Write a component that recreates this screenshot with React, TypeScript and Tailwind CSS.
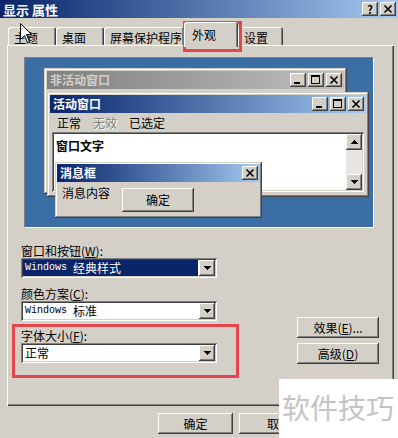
import React from 'react';

const raised =
  'shadow-[inset_-1px_-1px_#404040,inset_1px_1px_#ffffff,inset_-2px_-2px_#808080,inset_2px_2px_#d4d0c8]';
const sunken =
  'shadow-[inset_1px_1px_#808080,inset_-1px_-1px_#ffffff,inset_2px_2px_#404040,inset_-2px_-2px_#d4d0c8]';
const frame =
  'shadow-[inset_-1px_-1px_#404040,inset_1px_1px_#d4d0c8,inset_-2px_-2px_#808080,inset_2px_2px_#ffffff]';
const tabEdge = 'shadow-[inset_1px_1px_#ffffff,inset_-1px_0_#404040,inset_-2px_0_#808080]';

type Glyph = 'min' | 'max' | 'close' | 'help';

// kleine knoppen in de titelbalk
const CaptionButton = ({ glyph }: { glyph: Glyph }) => (
  <div className={`flex h-[14px] w-[16px] items-center justify-center bg-[#d4d0c8] ${raised}`}>
    {glyph === 'help' ? (
      <span className="text-[11px] font-bold leading-none text-black">?</span>
    ) : (
      <svg width="16" height="14" viewBox="0 0 16 14" shapeRendering="crispEdges">
        {glyph === 'min' && <rect x="4" y="9" width="6" height="2" fill="#000" />}
        {glyph === 'max' && (
          <>
            <rect x="3" y="2" width="9" height="2" fill="#000" />
            <rect x="3" y="2" width="1" height="9" fill="#000" />
            <rect x="11" y="2" width="1" height="9" fill="#000" />
            <rect x="3" y="10" width="9" height="1" fill="#000" />
          </>
        )}
        {glyph === 'close' && (
          <path d="M4.5 3.5 L11.5 10.5 M11.5 3.5 L4.5 10.5" stroke="#000" strokeWidth="1.6" shapeRendering="auto" />
        )}
      </svg>
    )}
  </div>
);

const Arrow = ({ up = false }: { up?: boolean }) => (
  <svg width="7" height="4" viewBox="0 0 7 4" shapeRendering="crispEdges">
    <polygon points={up ? '3.5,0 7,4 0,4' : '0,0 7,0 3.5,4'} fill="#000" />
  </svg>
);

const TitleBar = ({
  title,
  active = true,
  big = false,
  buttons,
}: {
  title: string;
  active?: boolean;
  big?: boolean;
  buttons: Glyph[];
}) => (
  <div
    className={`flex h-[18px] items-center justify-between pl-[3px] pr-[2px] ${
      active
        ? 'bg-gradient-to-r from-[#0a246a] to-[#a6caf0] text-white'
        : 'bg-gradient-to-r from-[#808080] to-[#c0c0c0] text-[#d4d0c8]'
    }`}
  >
    <span className={`${big ? 'text-[13px]' : 'text-[12px]'} font-bold leading-none`}>{title}</span>
    <div className="flex gap-[2px]">
      {buttons.map((b) => (
        <CaptionButton key={b} glyph={b} />
      ))}
    </div>
  </div>
);

const Dropdown = ({ children, selected = false }: { children: React.ReactNode; selected?: boolean }) => (
  <div className={`flex h-[20px] w-[196px] bg-white p-[2px] ${sunken}`}>
    <div
      className={`mr-[1px] flex flex-1 items-center pl-[2px] text-[12px] leading-none ${
        selected ? 'bg-[#0a246a] text-white' : 'text-black'
      }`}
    >
      {children}
    </div>
    <div className={`flex w-[16px] items-center justify-center bg-[#d4d0c8] ${raised}`}>
      <Arrow />
    </div>
  </div>
);

const Button = ({ children, className = '' }: { children: React.ReactNode; className?: string }) => (
  <div
    className={`flex items-center justify-center bg-[#d4d0c8] text-[12px] leading-none text-black ${raised} ${className}`}
  >
    {children}
  </div>
);

const Tab = ({ label, w, active = false }: { label: string; w: string; active?: boolean }) => (
  <div
    className={`rounded-t-[3px] bg-[#d4d0c8] text-[12px] leading-[14px] ${tabEdge} ${w} ${
      active ? 'relative z-10 -mb-[2px] h-[25px] pl-[8px] pt-[6px]' : 'h-[18px] pl-[6px] pt-[4px]'
    }`}
  >
    {label}
  </div>
);

export default function App() {
  return (
    <div className="relative flex h-[438px] w-[398px] flex-col overflow-hidden bg-[#d4d0c8] font-[family-name:'Noto_Sans_CJK_SC','Liberation_Sans',sans-serif] text-black">
      <TitleBar title="显示 属性" big buttons={['help', 'close']} />

      {/* tabbladen */}
      <div className="flex h-[27px] items-end pl-[8px]">
        <Tab label="主题" w="w-[48px]" />
        <Tab label="桌面" w="w-[48px]" />
        <Tab label="屏幕保护程序" w="w-[80px]" />
        <Tab label="外观" w="w-[54px]" active />
        <Tab label="设置" w="w-[45px]" />
      </div>

      {/* paneel */}
      <div className="ml-[7px] flex h-[361px] w-[387px] flex-col shadow-[inset_1px_1px_#ffffff,inset_-1px_-1px_#404040,inset_-2px_-2px_#808080]">
        <div className="relative ml-[17px] mt-[12px] h-[171px] w-[350px] border border-t-[#808080] border-l-[#808080] border-r-white border-b-white bg-[#3a6ea5]">
          {/* niet-actief venster */}
          <div className={`absolute left-[19px] top-[10px] h-[126px] w-[303px] bg-[#d4d0c8] p-[3px] ${frame}`}>
            <TitleBar title="非活动窗口" active={false} buttons={['min', 'max', 'close']} />
          </div>

          {/* actief venster */}
          <div className={`absolute left-[22px] top-[34px] flex h-[105px] w-[322px] flex-col bg-[#d4d0c8] p-[3px] ${frame}`}>
            <TitleBar title="活动窗口" buttons={['min', 'max', 'close']} />
            <div className="flex h-[19px] items-center gap-[12px] pl-[7px] text-[12px] leading-none">
              <span>正常</span>
              <span className="text-[#808080] [text-shadow:1px_1px_#ffffff]">无效</span>
              <span>已选定</span>
            </div>
            <div className={`mx-[2px] flex h-[60px] bg-white p-[2px] ${sunken}`}>
              <div className="flex-1 pl-[2px] pt-[6px] text-[12px] font-bold leading-none">窗口文字</div>
              <div className="flex w-[16px] flex-col justify-between bg-[#e8e6e0]">
                <div className={`flex h-[16px] items-center justify-center bg-[#d4d0c8] ${raised}`}>
                  <Arrow up />
                </div>
                <div className={`flex h-[16px] items-center justify-center bg-[#d4d0c8] ${raised}`}>
                  <Arrow />
                </div>
              </div>
            </div>
          </div>

          {/* berichtvenster */}
          <div className={`absolute left-[30px] top-[104px] flex h-[56px] w-[207px] flex-col bg-[#d4d0c8] p-[2px] ${frame}`}>
            <TitleBar title="消息框" buttons={['close']} />
            <div className="flex items-start pl-[5px]">
              <span className="pt-[5px] text-[12px] leading-none">消息内容</span>
              <Button className="ml-[12px] mt-[6px] h-[24px] w-[72px]">确定</Button>
            </div>
          </div>
        </div>

        <div className="flex">
          <div className="flex w-[240px] flex-col">
            <div className="ml-[14px] mt-[15px] h-[15px] text-[12px] leading-[15px]">
              窗口和按钮(<u>W</u>):
            </div>
            <div className="ml-[14px]">
              <Dropdown selected>
                <span className="font-['Liberation_Mono',monospace] text-[10px]">Windows&nbsp;</span>
                <span>经典样式</span>
              </Dropdown>
            </div>
            <div className="ml-[14px] mt-[8px] h-[15px] text-[12px] leading-[15px]">
              颜色方案(<u>C</u>):
            </div>
            <div className="ml-[14px]">
              <Dropdown>
                <span className="font-['Liberation_Mono',monospace] text-[10px]">Windows&nbsp;</span>
                <span>标准</span>
              </Dropdown>
            </div>
            <div className="ml-[5px] mt-[3px] w-[227px] border-[3px] border-[#e4474b] pb-[12px] pl-[6px] pt-[1px]">
              <div className="h-[15px] text-[12px] leading-[15px]">
                字体大小(<u>F</u>):
              </div>
              <Dropdown>正常</Dropdown>
            </div>
          </div>
          <div className="ml-auto mr-[15px] mt-[89px] flex flex-col gap-[5px]">
            <Button className="h-[21px] w-[82px]">
              效果(<u>E</u>)...
            </Button>
            <Button className="h-[21px] w-[82px]">
              高级(<u>D</u>)
            </Button>
          </div>
        </div>
      </div>

      {/* onderste knoppen */}
      <div className="mt-[7px] flex gap-[6px] pl-[158px]">
        <Button className="h-[21px] w-[75px]">确定</Button>
        <Button className="h-[21px] w-[75px] justify-start pl-[28px]">取消</Button>
      </div>

      {/* rode markering rond tab */}
      <div className="absolute left-[183px] top-[21px] h-[31px] w-[59px] border-[3px] border-[#e4474b]" />

      {/* muisaanwijzer */}
      <svg className="absolute left-[20px] top-[23px]" width="13" height="21" viewBox="0 0 13 21">
        <path d="M0.5 0.5 L0.5 16.5 L4.5 12.5 L7.5 19.5 L9.5 18.5 L6.5 11.5 L11.5 11.5 Z" fill="#fff" stroke="#000" strokeWidth="1" />
      </svg>

      {/* watermerk */}
      <div className="absolute left-[279px] top-[379px] h-[59px] w-[119px] bg-white pl-[3px] pt-[14px] text-[28px] leading-[28px] text-[#c4c4c4]">
        软件技巧
      </div>
    </div>
  );
}
